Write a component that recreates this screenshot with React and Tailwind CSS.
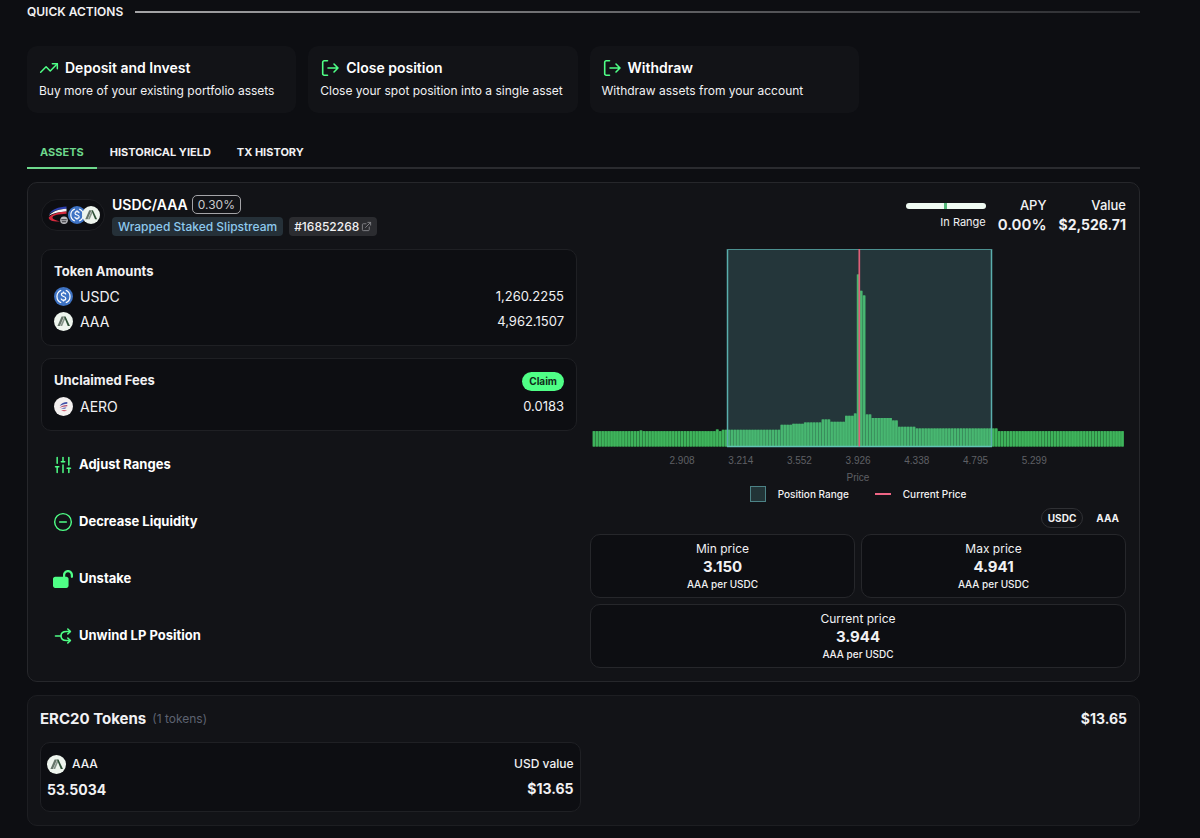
import React, { useState } from 'react';
import { CircleMinus, ExternalLink, SlidersVertical, TrendingUp } from 'lucide-react';
import { FaLockOpen } from 'react-icons/fa6';

const ExitIcon = ({ className }) => (
  <svg viewBox="0 0 20 20" className={className} fill="none" stroke="currentColor" strokeWidth="1.6" strokeLinecap="round" strokeLinejoin="round" aria-hidden="true">
    <path d="M7.500 2.800H4.200A1.500 1.500 0 0 0 2.700 4.300v11.400a1.500 1.500 0 0 0 1.500 1.500h3.300" />
    <path d="M8 10h10M14 6l4 4-4 4" />
  </svg>
);

const UnwindIcon = ({ className }) => (
  <svg viewBox="0 0 20 20" className={className} fill="none" stroke="currentColor" strokeWidth="1.6" strokeLinecap="round" strokeLinejoin="round" aria-hidden="true">
    <path d="M2.500 10h5.200" />
    <path d="M17.300 5.500h-3.800C10.500 5.500 8 7 8 10s2.500 4.500 5.500 4.500h3.800" />
    <path d="m14.800 3 2.600 2.500-2.600 2.500M14.800 12l2.600 2.500-2.600 2.500" />
  </svg>
);

const UsdcLogo = ({ className }) => (
  <svg viewBox="0 0 20 20" className={className} aria-hidden="true">
    <circle cx="10" cy="10" r="10" fill="#3e73c4" />
    <g fill="none" stroke="#fff" strokeWidth="1.300">
      <path d="M7.600 3.400a7.100 7.100 0 0 0 0 13.200M12.400 3.400a7.100 7.100 0 0 1 0 13.200" />
      <path d="M12.300 8c0-1.200-1-1.800-2.300-1.800S7.800 6.800 7.800 8c0 2.600 4.600 1.400 4.600 4 0 1.200-1.100 1.800-2.400 1.800S7.600 13.200 7.600 12M10 4.700v1.500M10 13.800v1.500" />
    </g>
  </svg>
);

const AaaLogo = ({ className }) => (
  <svg viewBox="0 0 20 20" className={className} aria-hidden="true">
    <circle cx="10" cy="10" r="10" fill="#eef5ee" />
    <path d="M3.600 14.800 8 4.800h2.600L6.200 14.800z" fill="#66756a" />
    <path d="M6.600 14.800 10.800 5.200l.9 2.200-3.100 7.400z" fill="#87958a" />
    <path d="M10.400 4.800h1.700l4.700 10h-2.300z" fill="#2c4f35" />
  </svg>
);

const AeroLogo = ({ className }) => (
  <svg viewBox="0 0 20 20" className={className} aria-hidden="true">
    <circle cx="10" cy="10" r="10" fill="#f3f0ef" />
    <path d="M6 9.500c1.500-2.800 4.500-3.900 8-4.200v1.700C11 7.200 8.200 7.900 6 9.500z" fill="#3f4fa8" />
    <path d="M5.800 11.600c1.700-2.100 4.500-2.900 8.200-3.100v1.300c-3.200.1-5.900.7-8.200 1.800z" fill="#b0476c" />
    <path d="M6.800 13c2.100-1.600 4.200-1.900 6.400-1.900l-1.500 1.300c-1.700 0-3.300.1-4.900.6z" fill="#5560b5" />
    <path d="M7.500 14.300c1.900-.8 4.400-.7 6.300.3-2 .7-4.400.7-6.300-.3z" fill="#d0566b" />
  </svg>
);

const SlipstreamLogo = ({ className }) => (
  <svg viewBox="0 0 20 20" className={className} aria-hidden="true">
    <path d="M1 9.500C3.500 4 10.500 1.800 18.500 1.400v2.400C11 4.200 5 5.800 1 9.500z" fill="#2c3fae" />
    <path d="M.8 10.800C4.500 6.600 10.500 4.200 18.500 3.800v2.800C11 7 5.500 8 .8 10.800z" fill="#f4f4f8" />
    <path d="M.8 12.200C5 8.800 10.500 7 18.500 6.600v2.200C10 9.200 6 10 4.600 12c-1 1.800 3 3.400 7.400 4.500C5 16.800.2 15.200.8 12.200z" fill="#d5293d" />
    <circle cx="16" cy="15.200" r="3.800" fill="#b9b9bd" />
    <path d="M13.300 14.200h5.400v1h-5.400zM13.800 16.300h4.400v.9h-4.400z" fill="#303036" />
  </svg>
);

const quickActions = [
  { title: 'Deposit and Invest', text: 'Buy more of your existing portfolio assets', icon: <TrendingUp className="size-5" strokeWidth={1.8} /> },
  { title: 'Close position', text: 'Close your spot position into a single asset', icon: <ExitIcon className="size-5" /> },
  { title: 'Withdraw', text: 'Withdraw assets from your account', icon: <ExitIcon className="size-5" /> },
];

const positionActions = [
  { title: 'Adjust Ranges', icon: <SlidersVertical className="size-5" strokeWidth={1.8} /> },
  { title: 'Decrease Liquidity', icon: <CircleMinus className="size-5" strokeWidth={1.7} /> },
  { title: 'Unstake', icon: <FaLockOpen className="size-5" /> },
  { title: 'Unwind LP Position', icon: <UnwindIcon className="size-5" /> },
];

const tabs = ['ASSETS', 'HISTORICAL YIELD', 'TX HISTORY'];

// [number of ticks, liquidity height]
const liquidity = [
  [16, 15.3], [1, 16], [25, 15.3], [1, 17], [1, 15.3], [20, 16.7], [4, 21.7], [4, 22.7], [6, 24],
  [3, 27], [5, 24.7], [3, 30.7], [1, 33], [1, 172], [1, 155.7], [1, 151], [2, 32], [7, 28.5],
  [2, 26], [6, 19.7], [28, 18], [43, 15.3],
];
const bars = liquidity.flatMap(([count, height]) => Array(count).fill(height));
const prices = ['2.908', '3.214', '3.552', '3.926', '4.338', '4.795', '5.299'];
const BAR = 2.936;

const LiquidityChart = () => (
  <svg viewBox="0 -1 536 237" className="block w-full" role="img" aria-label="Liquidity by price">
    {bars.map((h, i) => (
      <g key={i}>
        <rect x={2.5 + i * BAR} y={196.5 - h} width={BAR} height={h} fill="#37a250" />
        <rect x={3 + i * BAR} y={196.5 - h} width="1.9" height={h} fill="#3fb45c" />
      </g>
    ))}
    <rect x="137.500" y="-.5" width="264" height="197" fill="#6cc4c6" fillOpacity="0.2" />
    <path d="M137.500 196.500V-1M401.500 196.500V-1" stroke="#5aaead" strokeWidth="1.500" />
    <path d="M137-.5h265" stroke="#4c9090" />
    <path d="M137 196.500h265" stroke="#62c3b4" strokeWidth="1.500" />
    <path d="M269.300-1v197.500" stroke="#df5f78" strokeWidth="1.700" />
    <g fill="#5f6065" fontSize="10" textAnchor="middle" fontFamily="Liberation Sans, Arial, sans-serif">
      {prices.map((p, i) => (
        <text key={p} x={92 + i * 58.700} y="213.500">{p}</text>
      ))}
      <text x="268" y="230.500">Price</text>
    </g>
  </svg>
);

const TokenRow = ({ logo, name, amount }) => (
  <div className="flex h-[25px] items-center text-sm">
    {logo}
    <span className="ml-[7px]">{name}</span>
    <span className="ml-auto text-[13px]">{amount}</span>
  </div>
);

const PriceCard = ({ label, value, className = '' }) => (
  <div className={`flex h-16 flex-col items-center justify-center rounded-[10px] border border-[#26272b] bg-[#0d0e12] ${className}`}>
    <span className="text-xs leading-[18px]">{label}</span>
    <span className="text-[15px] leading-[18px] font-bold">{value}</span>
    <span className="text-[10px] leading-4 font-medium">AAA per USDC</span>
  </div>
);

const App = () => {
  const [tab, setTab] = useState('ASSETS');
  const [quote, setQuote] = useState('USDC');

  return (
    <main className="min-h-screen bg-[#0d0e12] pr-[60px] pb-3 pl-[27px] font-[Inter,sans-serif] text-[#f1f1f3]">
      <div className="flex h-6 items-center gap-3">
        <h2 className="text-xs font-semibold">QUICK ACTIONS</h2>
        <div className="h-0.5 flex-1 bg-linear-to-r from-[#a5a5a7] to-[#2a2b2f]" />
      </div>

      <div className="mt-[22px] grid grid-cols-4 gap-3">
        {quickActions.map((a) => (
          <button key={a.title} type="button" className="h-[67px] rounded-[10px] bg-[#121317] px-3 pb-0.5 text-left">
            <span className="flex items-center gap-1.5 text-sm leading-6 font-semibold text-white">
              <span className="text-[#4fff86]">{a.icon}</span>
              {a.title}
            </span>
            <span className="block text-xs leading-[22px] whitespace-nowrap">{a.text}</span>
          </button>
        ))}
      </div>

      <div role="tablist" className="mt-[23px] flex h-[33px] border-b-2 border-[#2a2b2f]">
        {tabs.map((name) => (
          <button
            key={name}
            type="button"
            role="tab"
            aria-selected={tab === name}
            onClick={() => setTab(name)}
            className={`-mb-0.5 h-[33px] border-b-2 px-[13px] pt-0.5 text-[11px] font-bold ${tab === name ? 'border-[#6dd88c] text-[#6dd88c]' : 'border-transparent'}`}
          >
            {name}
          </button>
        ))}
      </div>

      <section className="mt-[13px] rounded-[10px] border border-[#26272b] bg-[#121317] px-[13px] pt-3 pb-[13px]">
        <header className="flex h-[54px] items-start justify-between">
          <div className="flex gap-[7px]">
            <div className="mt-1 flex h-8 w-16 items-center rounded-full border border-[#1d1e22] bg-[#0d0e12] pl-1.5">
              <SlipstreamLogo className="size-5" />
              <UsdcLogo className="size-[18px]" />
              <AaaLogo className="-ml-1 size-[18px]" />
            </div>
            <div>
              <div className="flex h-[19px] items-center gap-1">
                <h3 className="text-sm font-semibold text-white">USDC/AAA</h3>
                <span className="rounded-[5px] border border-[#a4a4a8] px-[5px] text-xs leading-[17px] text-[#c9c9cd]">0.30%</span>
              </div>
              <div className="mt-[3px] flex gap-1.5 text-xs leading-[19px] font-medium">
                <span className="rounded bg-[#253038] px-1.5 text-[#8ec9ee]">Wrapped Staked Slipstream</span>
                <a href="#16852268" className="flex items-center gap-0.5 rounded bg-[#2b2c30] px-[5px]">
                  #16852268
                  <ExternalLink className="size-[11px] text-[#85868a]" />
                </a>
              </div>
            </div>
          </div>
          <div className="flex gap-3 text-right">
            <div className="flex w-20 flex-col items-end pt-2">
              <div className="flex h-1.5 w-full justify-center rounded-full bg-[#effaf2]">
                <span className="w-[3px] bg-[#54b97a]" />
              </div>
              <span className="mt-1 text-[11px] leading-[18px]">In Range</span>
            </div>
            <div>
              <p className="text-[13px] leading-5 font-medium">APY</p>
              <p className="text-[15px] leading-5 font-semibold">0.00%</p>
            </div>
            <div>
              <p className="text-[13px] leading-5 font-medium">Value</p>
              <p className="text-sm leading-5 font-bold">$2,526.71</p>
            </div>
          </div>
        </header>

        <div className="grid grid-cols-2 gap-[13px]">
          <div>
            <div className="rounded-[10px] border border-[#1f2024] bg-[#0d0e12] px-3 pt-[9px] pb-[11px]">
              <h4 className="text-[13px] leading-[25px] font-bold">Token Amounts</h4>
              <TokenRow logo={<UsdcLogo className="size-[19px]" />} name="USDC" amount="1,260.2255" />
              <TokenRow logo={<AaaLogo className="size-[19px]" />} name="AAA" amount="4,962.1507" />
            </div>

            <div className="mt-3 rounded-[10px] border border-[#1f2024] bg-[#0d0e12] px-3 pt-[9px] pb-[11px]">
              <div className="flex h-[26px] items-center justify-between">
                <h4 className="text-[13px] font-bold">Unclaimed Fees</h4>
                <button type="button" className="h-[19px] rounded-full bg-[#4fff86] px-[7px] text-[10px] font-bold text-[#0f2b19]">Claim</button>
              </div>
              <TokenRow logo={<AeroLogo className="size-[19px]" />} name="AERO" amount="0.0183" />
            </div>

            <div className="mt-3 flex flex-col gap-[13px]">
              {positionActions.map((a) => (
                <button key={a.title} type="button" className="flex h-11 items-center gap-1.5 rounded-[10px] px-3 text-left text-[13px] font-bold text-white">
                  <span className="text-[#4fff86]">{a.icon}</span>
                  {a.title}
                </button>
              ))}
            </div>
          </div>

          <div>
            <LiquidityChart />
            <div className="flex h-4 items-center justify-center text-[10px] font-medium">
              <span className="size-4 border border-[#4c8286] bg-[#223437]" />
              <span className="ml-3">Position Range</span>
              <span className="ml-[26px] h-0.5 w-4 bg-[#ee6585]" />
              <span className="ml-3">Current Price</span>
            </div>
            <div className="mt-1.5 flex justify-end text-[10px] font-bold">
              {['USDC', 'AAA'].map((q) => (
                <button
                  key={q}
                  type="button"
                  aria-pressed={quote === q}
                  onClick={() => setQuote(q)}
                  className={`h-5 rounded-full border px-1.5 ${quote === q ? 'border-[#2f3034]' : 'border-transparent'} first:mr-1.5`}
                >
                  {q}
                </button>
              ))}
            </div>
            <div className="mt-1.5 grid grid-cols-2 gap-1.5">
              <PriceCard label="Min price" value="3.150" />
              <PriceCard label="Max price" value="4.941" />
              <PriceCard label="Current price" value="3.944" className="col-span-2" />
            </div>
          </div>
        </div>
      </section>

      <section className="mt-[13px] rounded-[10px] border border-[#1d1e22] bg-[#121317] px-3 pb-[13px]">
        <header className="flex h-[46px] items-center">
          <h3 className="text-[15px] font-bold">ERC20 Tokens</h3>
          <span className="ml-1.5 text-xs text-[#5d6270]">(1 tokens)</span>
          <span className="ml-auto text-sm font-bold">$13.65</span>
        </header>
        <div className="grid grid-cols-2 gap-1.5">
          <div className="flex h-[70px] justify-between rounded-[10px] border border-[#1f2024] bg-[#0d0e12] px-1.5 pt-2">
            <div>
              <p className="flex h-[26px] items-center gap-1.5 text-xs font-medium">
                <AaaLogo className="size-[19px]" />
                AAA
              </p>
              <p className="text-sm leading-[26px] font-bold">53.5034</p>
            </div>
            <div className="text-right">
              <p className="text-xs leading-[26px] font-medium">USD value</p>
              <p className="text-sm leading-6 font-bold">$13.65</p>
            </div>
          </div>
        </div>
      </section>
    </main>
  );
};

export default App;
